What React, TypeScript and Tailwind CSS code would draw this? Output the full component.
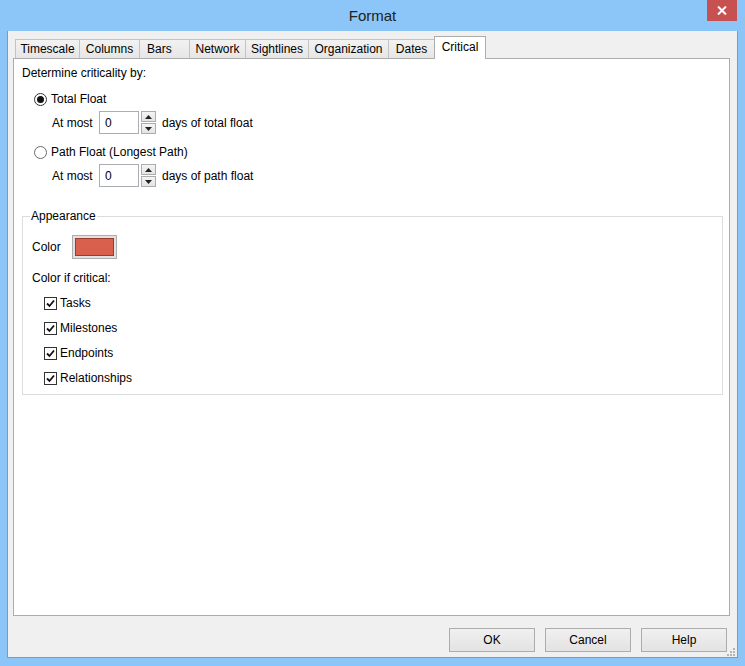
import React from "react";

const tabs = [
  { label: "Timescale", w: "w-[64px]", align: "justify-center" },
  { label: "Columns", w: "w-[60px]", align: "justify-center" },
  { label: "Bars", w: "w-[50px]", align: "justify-start pl-[7px]" },
  { label: "Network", w: "w-[56px]", align: "justify-center" },
  { label: "Sightlines", w: "w-[63px]", align: "justify-center" },
  { label: "Organization", w: "w-[80px]", align: "justify-center" },
  { label: "Dates", w: "w-[46px]", align: "justify-center" },
];

function Radio({ checked }: { checked?: boolean }) {
  return (
    <span
      className={`w-[13px] h-[13px] rounded-full border bg-white flex items-center justify-center ${
        checked ? "border-[#333]" : "border-[#6a6a6a]"
      }`}
    >
      {checked && <span className="w-[7px] h-[7px] rounded-full bg-[#111]" />}
    </span>
  );
}

function Check() {
  return (
    <span className="w-[13px] h-[13px] border border-[#333] bg-white flex items-center justify-center">
      <svg width="9" height="9" viewBox="0 0 9 9">
        <path d="M1 4.5 L3.5 7 L8 1.5" fill="none" stroke="#111" strokeWidth="1.8" />
      </svg>
    </span>
  );
}

function Spinner() {
  return (
    <div className="ml-[2px] flex flex-col gap-[1px] w-[15px] h-[23px]">
      <div className="h-[11px] border border-[#acacac] bg-gradient-to-b from-[#f4f4f4] to-[#e4e4e4] flex items-center justify-center">
        <svg width="7" height="4" viewBox="0 0 7 4">
          <path d="M0 4 L3.5 0 L7 4 Z" fill="#222" />
        </svg>
      </div>
      <div className="h-[11px] border border-[#acacac] bg-gradient-to-b from-[#f4f4f4] to-[#e4e4e4] flex items-center justify-center">
        <svg width="7" height="4" viewBox="0 0 7 4">
          <path d="M0 0 L7 0 L3.5 4 Z" fill="#222" />
        </svg>
      </div>
    </div>
  );
}

function AtMost({ text }: { text: string }) {
  return (
    <div className="mt-[5px] ml-[30px] flex items-center h-[23px]">
      <span className="w-[47px]">At most</span>
      <div className="w-[40px] h-[23px] border border-[#abadb3] bg-white flex items-center pl-[5px]">0</div>
      <Spinner />
      <span className="ml-[6px]">{text}</span>
    </div>
  );
}

function CheckRow({ label }: { label: string }) {
  return (
    <div className="mt-[11px] ml-[21px] flex items-center h-[14px] gap-[3px]">
      <Check />
      <span>{label}</span>
    </div>
  );
}

function Button({ children }: { children: React.ReactNode }) {
  return (
    <div className="w-[86px] h-[24px] border border-[#acacac] bg-gradient-to-b from-[#f0f0f0] to-[#e3e3e3] flex items-center justify-center">
      {children}
    </div>
  );
}

export default function App() {
  return (
    <div className="relative w-[745px] h-[666px] bg-[#8cc5f7] flex flex-col font-['Liberation_Sans',Arial,sans-serif] text-[12px] leading-[14px] text-black overflow-hidden">
      {/* Title bar */}
      <div className="relative h-[31px] flex items-center justify-center">
        <span className="text-[15px] text-[#222] leading-[18px]">Format</span>
        <div className="absolute right-[8px] top-0 w-[30px] h-[21px] bg-[#c75050] flex items-center justify-center">
          <svg width="10" height="9" viewBox="0 0 10 9">
            <path d="M1 0.5 L9 8.5 M9 0.5 L1 8.5" stroke="#fff" strokeWidth="2" />
          </svg>
        </div>
      </div>

      {/* Client area */}
      <div className="relative ml-[7px] w-[731px] h-[627px] bg-[#f0f0f0] border-x border-b border-[#6b9fd0] flex flex-col">
        {/* Tabs */}
        <div className="mt-[5px] ml-[7px] h-[22px] flex items-end">
          {tabs.map((t) => (
            <div
              key={t.label}
              className={`${t.w} ${t.align} h-[19px] border-t border-l border-[#c3c3c3] bg-gradient-to-b from-[#f2f2f2] to-[#e6e6e6] flex items-center`}
            >
              {t.label}
            </div>
          ))}
          <div className="relative z-10 w-[52px] h-[23px] -mb-[1px] border-t border-x border-[#acacac] bg-white flex justify-center pt-[3px]">
            Critical
          </div>
        </div>

        {/* Panel */}
        <div className="ml-[5px] w-[717px] h-[558px] border border-[#acacac] bg-white flex flex-col pl-[8px] pr-[6px]">
          <div className="mt-[7px] h-[14px]">Determine criticality by:</div>

          <div className="mt-[12px] ml-[12px] h-[14px] flex items-center gap-[4px]">
            <Radio checked />
            <span>Total Float</span>
          </div>
          <AtMost text="days of total float" />

          <div className="mt-[11px] ml-[12px] h-[14px] flex items-center gap-[4px]">
            <Radio />
            <span>Path Float (Longest Path)</span>
          </div>
          <AtMost text="days of path float" />

          {/* Appearance group */}
          <div className="relative mt-[29px] border border-[#dcdcdc] flex flex-col pb-[9px]">
            <span className="absolute left-[7px] -top-[8px] px-[1px] bg-white">Appearance</span>
            <div className="mt-[18px] ml-[9px] flex items-center h-[24px]">
              <span className="w-[40px]">Color</span>
              <div className="w-[45px] h-[24px] border border-[#adadad] bg-[#e1e1e1] p-[2px]">
                <div className="w-full h-full bg-[#d9604c] border border-[#9e3a2b]" />
              </div>
            </div>
            <div className="mt-[12px] ml-[9px] h-[14px]">Color if critical:</div>
            <CheckRow label="Tasks" />
            <CheckRow label="Milestones" />
            <CheckRow label="Endpoints" />
            <CheckRow label="Relationships" />
          </div>
        </div>

        {/* Buttons */}
        <div className="mt-[12px] mr-[10px] flex justify-end gap-[10px]">
          <Button>OK</Button>
          <Button>Cancel</Button>
          <Button>Help</Button>
        </div>

        {/* Resize grip */}
        <svg className="absolute right-[2px] bottom-[1px]" width="8" height="8" viewBox="0 0 8 8">
          <rect x="6" y="0" width="2" height="2" fill="#b5b5b5" />
          <rect x="3" y="3" width="2" height="2" fill="#b5b5b5" />
          <rect x="6" y="3" width="2" height="2" fill="#b5b5b5" />
          <rect x="0" y="6" width="2" height="2" fill="#b5b5b5" />
          <rect x="3" y="6" width="2" height="2" fill="#b5b5b5" />
          <rect x="6" y="6" width="2" height="2" fill="#b5b5b5" />
        </svg>
      </div>
    </div>
  );
}
